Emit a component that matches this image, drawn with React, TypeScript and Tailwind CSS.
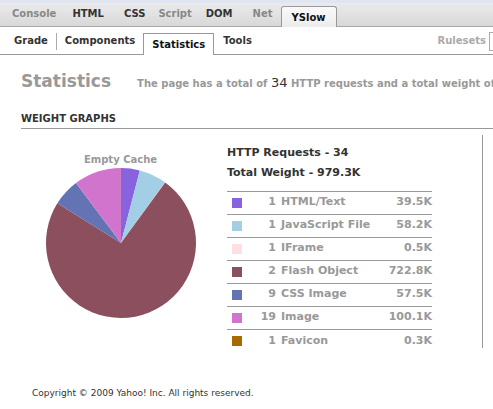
import React from 'react'

const font = { fontFamily: '"DejaVu Sans", Verdana, sans-serif' }

const rows = [
  { color: '#8963df', count: 1, name: 'HTML/Text', size: '39.5K', kb: 39.5 },
  { color: '#a2cfe6', count: 1, name: 'JavaScript File', size: '58.2K', kb: 58.2 },
  { color: '#ffdfdf', count: 1, name: 'IFrame', size: '0.5K', kb: 0.5 },
  { color: '#8c4f5d', count: 2, name: 'Flash Object', size: '722.8K', kb: 722.8 },
  { color: '#6473b4', count: 9, name: 'CSS Image', size: '57.5K', kb: 57.5 },
  { color: '#d174ce', count: 19, name: 'Image', size: '100.1K', kb: 100.1 },
  { color: '#a86900', count: 1, name: 'Favicon', size: '0.3K', kb: 0.3 },
]

function Pie() {
  const total = rows.reduce((s, r) => s + r.kb, 0)
  const cx = 76
  const cy = 76
  const r = 75
  let acc = 0
  const pt = (f: number) => {
    const a = f * Math.PI * 2
    return [cx + r * Math.sin(a), cy - r * Math.cos(a)]
  }
  return (
    <svg width="152" height="152" viewBox="0 0 152 152">
      {rows.map((row) => {
        const f0 = acc / total
        acc += row.kb
        const f1 = acc / total
        const [x0, y0] = pt(f0)
        const [x1, y1] = pt(f1)
        const large = f1 - f0 > 0.5 ? 1 : 0
        return (
          <path
            key={row.name}
            d={`M${cx},${cy} L${x0},${y0} A${r},${r} 0 ${large} 1 ${x1},${y1} Z`}
            fill={row.color}
          />
        )
      })}
    </svg>
  )
}

export default function App() {
  return (
    <div className="w-[493px] h-[409px] overflow-hidden bg-white relative" style={font}>
      {/* Firebug tab bar */}
      <div className="h-[3px] bg-[#dfe6f2]" />
      <div className="h-[24px] flex items-end bg-gradient-to-b from-[#ebebeb] to-[#d8d8d8] border-b border-[#a8a8a8] text-[10px] font-bold">
        <span className="ml-[12px] mb-[5px] text-[#888]">Console</span>
        <span className="ml-[16px] mb-[5px] text-[#333]">HTML</span>
        <span className="ml-[20px] mb-[5px] text-[#333]">CSS</span>
        <span className="ml-[13px] mb-[5px] text-[#888]">Script</span>
        <span className="ml-[14px] mb-[5px] text-[#333]">DOM</span>
        <span className="ml-[20px] mb-[5px] text-[#888]">Net</span>
        <span className="ml-[8px] -mb-px h-[21px] px-[10px] flex items-center bg-gradient-to-b from-[#fafafa] to-[#ececec] border border-b-0 border-[#999] rounded-t-[3px] text-[#111]">
          YSlow
        </span>
      </div>

      {/* YSlow tabs */}
      <div className="h-[28px] flex items-end border-b border-[#999] text-[10px] font-bold text-[#333]">
        <span className="ml-[14px] mb-[6px]">Grade</span>
        <span className="ml-[8px] mb-[4px] w-px h-[17px] bg-[#aaa]" />
        <span className="ml-[8px] mb-[6px]">Components</span>
        <span className="ml-[8px] -mb-px h-[22px] px-[8px] flex items-center bg-white border border-b-0 border-[#999] text-[#111]">
          Statistics
        </span>
        <span className="ml-[9px] mb-[6px]">Tools</span>
        <span className="ml-auto mb-[6px] text-[#aaa]">Rulesets</span>
        <span className="ml-[3px] mb-[3px] w-[4px] h-[19px] border border-r-0 border-[#aaa] shrink-0" />
      </div>

      {/* Heading */}
      <div className="flex items-baseline mt-[14px] ml-[21px] whitespace-nowrap">
        <span className="text-[17px] font-bold text-[#999]">Statistics</span>
        <span className="ml-[26px] text-[10px] font-bold text-[#999]">
          The page has a total of <span className="text-[13px] font-normal text-[#333]">34</span> HTTP requests and a total weight of 979.3K bytes
        </span>
      </div>

      <div className="mt-[16px] ml-[21px] pb-[2px] border-b border-[#999] text-[10px] font-bold text-[#333]">
        WEIGHT GRAPHS
      </div>

      <div className="flex mt-[6px]">
        <div className="w-[205px] flex flex-col items-center ml-[18px]">
          <div className="mt-[17px] text-[10px] font-bold text-[#999]">Empty Cache</div>
          <div className="mt-[0px]">
            <Pie />
          </div>
        </div>
        <div className="w-[205px] ml-[4px] mt-[10px]">
          <div className="text-[11px] font-bold text-[#333] leading-[15px]">HTTP Requests - 34</div>
          <div className="mt-[5px] pb-[11px] text-[11px] font-bold text-[#333] leading-[15px] border-b border-[#999]">
            Total Weight - 979.3K
          </div>
          {rows.map((row, i) => (
            <div
              key={row.name}
              className={`h-[23px] flex items-center text-[11px] font-bold text-[#999] ${i < rows.length - 1 ? 'border-b border-[#999]' : ''}`}
            >
              <span className="ml-[5px] w-[10px] h-[10px] shrink-0" style={{ background: row.color }} />
              <span className="w-[34px] text-right">{row.count}</span>
              <span className="ml-[5px] flex-1">{row.name}</span>
              <span className="text-right">{row.size}</span>
            </div>
          ))}
        </div>
        <div className="ml-[50px] w-px h-[213px] bg-[#999]" />
      </div>

      <div className="mt-[34px] ml-[32px] text-[9px] text-[#333]">
        Copyright © 2009 Yahoo! Inc. All rights reserved.
      </div>
    </div>
  )
}
